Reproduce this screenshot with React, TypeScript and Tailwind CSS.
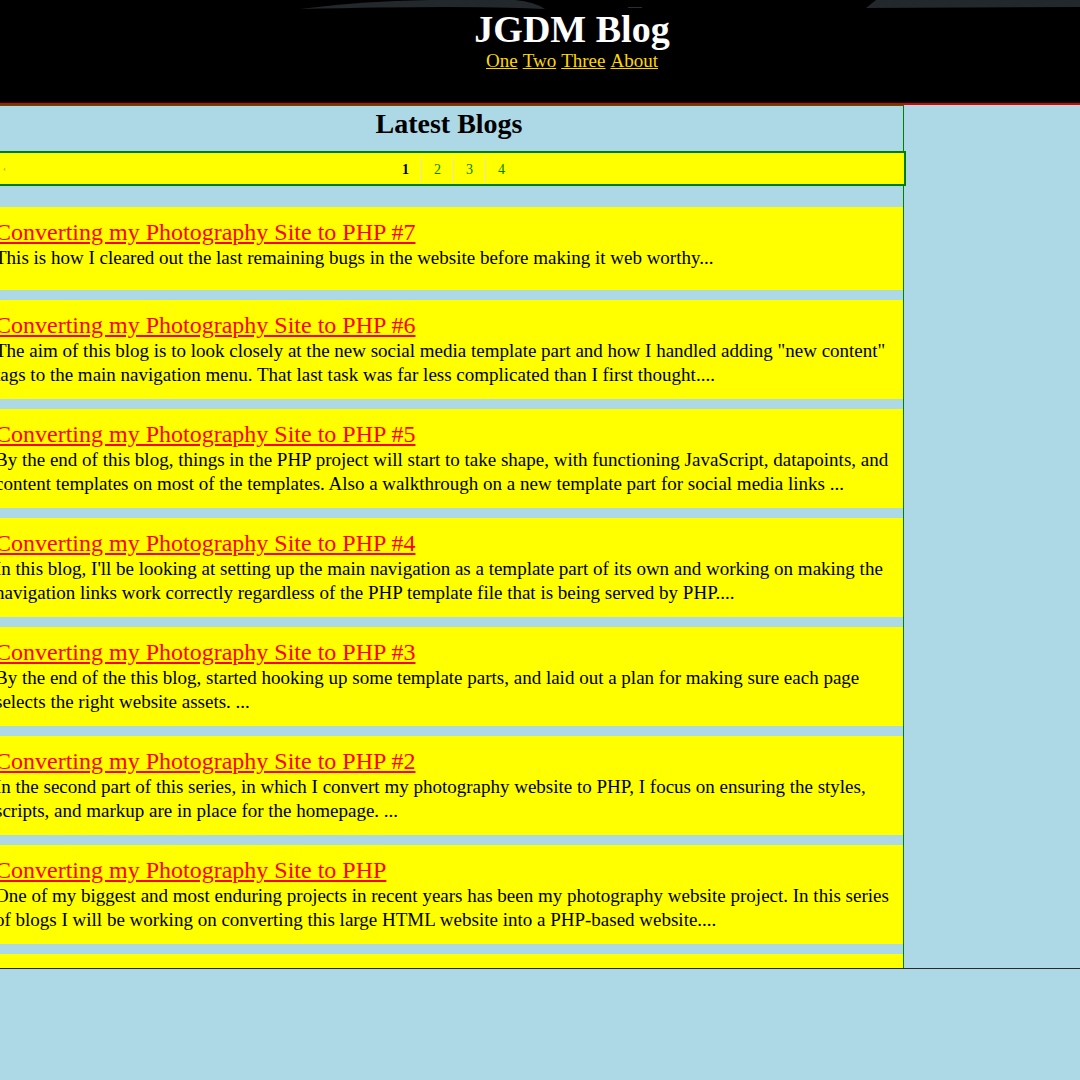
import React from 'react';

interface Post {
  title: string;
  summary: string;
}

const posts: Post[] = [
  {
    title: 'Converting my Photography Site to PHP #7',
    summary: 'This is how I cleared out the last remaining bugs in the website before making it web worthy...',
  },
  {
    title: 'Converting my Photography Site to PHP #6',
    summary:
      'The aim of this blog is to look closely at the new social media template part and how I handled adding "new content" tags to the main navigation menu. That last task was far less complicated than I first thought....',
  },
  {
    title: 'Converting my Photography Site to PHP #5',
    summary:
      'By the end of this blog, things in the PHP project will start to take shape, with functioning JavaScript, datapoints, and content templates on most of the templates. Also a walkthrough on a new template part for social media links ...',
  },
  {
    title: 'Converting my Photography Site to PHP #4',
    summary:
      "In this blog, I'll be looking at setting up the main navigation as a template part of its own and working on making the navigation links work correctly regardless of the PHP template file that is being served by PHP....",
  },
  {
    title: 'Converting my Photography Site to PHP #3',
    summary:
      'By the end of the this blog, started hooking up some template parts, and laid out a plan for making sure each page selects the right website assets. ...',
  },
  {
    title: 'Converting my Photography Site to PHP #2',
    summary:
      'In the second part of this series, in which I convert my photography website to PHP, I focus on ensuring the styles, scripts, and markup are in place for the homepage. ...',
  },
  {
    title: 'Converting my Photography Site to PHP',
    summary:
      'One of my biggest and most enduring projects in recent years has been my photography website project. In this series of blogs I will be working on converting this large HTML website into a PHP-based website....',
  },
  {
    title: 'Photography Site',
    summary: '',
  },
];

const navLinks = ['One', 'Two', 'Three', 'About'];
const pages = ['1', '2', '3', '4'];

function Header() {
  return (
    <header className="relative bg-black h-[105px] border-b-2 border-[#e00000] text-center pt-[7px] pl-[64px]">
      {/* dark shapes peeking in along the top edge */}
      <svg className="absolute left-0 top-0" width="1080" height="10" viewBox="0 0 1080 10">
        <path d="M300 9 Q360 1 430 0 L515 0 Q535 2 545 9 Q470 5 300 9 Z" fill="#23282c" />
        <path d="M866 8 L876 0 L1080 0 L1080 7 Z" fill="#23282c" />
        <rect x="628" y="7" width="14" height="1" fill="#2a2e32" />
      </svg>
      <h1 className="relative text-white font-bold text-[38px] leading-[44px]">JGDM Blog</h1>
      <nav className="relative text-[19px] leading-[20px] space-x-[5px]">
        {navLinks.map((link) => (
          <a key={link} href="#" className="text-[#ffd700] underline">
            {link}
          </a>
        ))}
      </nav>
    </header>
  );
}

function Pagination() {
  return (
    <div className="relative w-[911px] h-[35px] bg-[#ffff00] border-2 border-[#008000] flex items-center justify-center pl-[6px] pt-[2px] text-[14px]">
      <span className="absolute left-[6px] top-[9px] text-[9px] text-[#999900]">‹</span>
      {pages.map((page, i) => (
        <span
          key={page}
          className={`px-[12px] leading-[24px] ${i > 0 ? 'border-l border-[#e2e2c4]' : ''} ${
            i === 0 ? 'text-black font-bold' : 'text-[#008000]'
          }`}
        >
          {page}
        </span>
      ))}
    </div>
  );
}

function PostCard({ post }: { post: Post }) {
  return (
    <article className="shrink-0 bg-[#ffff00] min-h-[83px] pt-[12px] pb-[12px]">
      <h3 className="text-[24px] leading-[27px]">
        <a href="#" className="text-[#ff0000] underline">
          {post.title}
        </a>
      </h3>
      <p className="text-[19px] leading-[24px] text-black">{post.summary}</p>
    </article>
  );
}

export default function App() {
  return (
    <div className="min-h-screen bg-[#add8e6] overflow-hidden" style={{ fontFamily: '"Liberation Serif", "Times New Roman", serif' }}>
      <Header />
      <div className="flex">
        <main className="w-[909px] shrink-0 -ml-[5px] border-r border-t border-[#008000]">
          <h2 className="text-center font-bold text-[28px] leading-[36px] mb-[9px]">Latest Blogs</h2>
          <Pagination />
          <div className="h-[782px] overflow-hidden pt-[21px] flex flex-col gap-[10px]">
            {posts.map((post) => (
              <PostCard key={post.title} post={post} />
            ))}
          </div>
        </main>
        <aside className="flex-1" />
      </div>
      <footer className="border-t border-[#2a2a2a] h-[200px]" />
    </div>
  );
}
